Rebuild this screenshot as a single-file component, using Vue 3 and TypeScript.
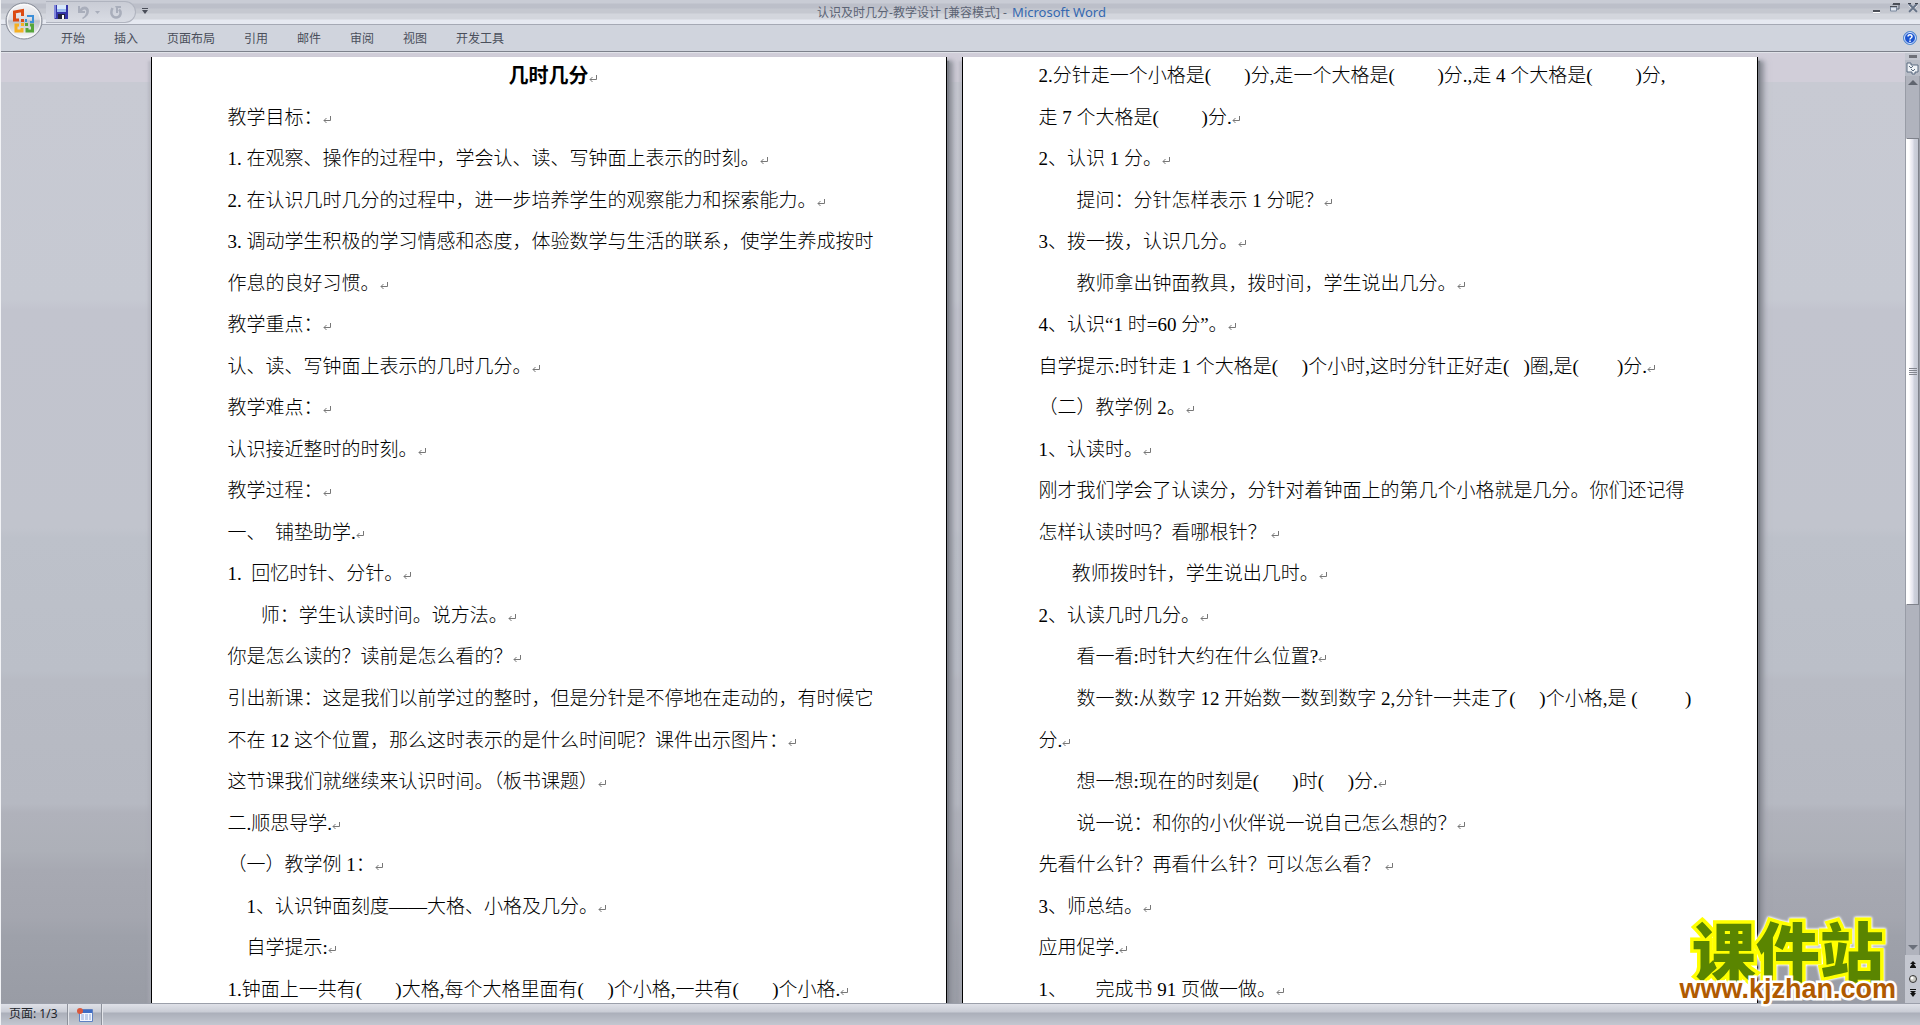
<script setup lang="ts">
interface Line {
  text: string
  mark?: boolean
  title?: boolean
}

const sp = (n: number): string => '\u00a0'.repeat(n)
const blank = (n: number): string => `(${sp(n)})`
const para = (text: string): Line => ({ text, mark: true })
const wrapped = (text: string): Line => ({ text })

const tabs: string[] = ['开始', '插入', '页面布局', '引用', '邮件', '审阅', '视图', '开发工具']

const pages: Line[][] = [
  [
    { text: '几时几分', mark: true, title: true },
    para('教学目标：'),
    para('1. 在观察、操作的过程中，学会认、读、写钟面上表示的时刻。'),
    para('2. 在认识几时几分的过程中，进一步培养学生的观察能力和探索能力。'),
    wrapped('3. 调动学生积极的学习情感和态度，体验数学与生活的联系，使学生养成按时'),
    para('作息的良好习惯。'),
    para('教学重点：'),
    para('认、读、写钟面上表示的几时几分。'),
    para('教学难点：'),
    para('认识接近整时的时刻。'),
    para('教学过程：'),
    para(`一、${sp(2)}铺垫助学.`),
    para(`1.${sp(2)}回忆时针、分针。`),
    para(`${sp(7)}师：学生认读时间。说方法。`),
    para('你是怎么读的？读前是怎么看的？'),
    wrapped('引出新课：这是我们以前学过的整时，但是分针是不停地在走动的，有时候它'),
    para('不在 12 这个位置，那么这时表示的是什么时间呢？课件出示图片：'),
    para('这节课我们就继续来认识时间。（板书课题）'),
    para('二.顺思导学.'),
    para('（一）教学例 1：'),
    para(`${sp(4)}1、认识钟面刻度——大格、小格及几分。`),
    para(`${sp(4)}自学提示:`),
    para(`1.钟面上一共有${blank(7)}大格,每个大格里面有${blank(5)}个小格,一共有${blank(7)}个小格.`),
  ],
  [
    wrapped(`2.分针走一个小格是${blank(7)}分,走一个大格是${blank(9)}分.,走 4 个大格是${blank(9)}分,`),
    para(`走 7 个大格是${blank(9)}分.`),
    para('2、认识 1 分。'),
    para(`${sp(8)}提问：分针怎样表示 1 分呢？`),
    para('3、拨一拨，认识几分。'),
    para(`${sp(8)}教师拿出钟面教具，拨时间，学生说出几分。`),
    para('4、认识“1 时=60 分”。'),
    para(`自学提示:时针走 1 个大格是${blank(5)}个小时,这时分针正好走${blank(3)}圈,是${blank(8)}分.`),
    para('（二）教学例 2。'),
    para('1、认读时。'),
    wrapped('刚才我们学会了认读分，分针对着钟面上的第几个小格就是几分。你们还记得'),
    para(`怎样认读时吗？看哪根针？${sp(1)}`),
    para(`${sp(7)}教师拨时针，学生说出几时。`),
    para('2、认读几时几分。'),
    para(`${sp(8)}看一看:时针大约在什么位置?`),
    wrapped(`${sp(8)}数一数:从数字 12 开始数一数到数字 2,分针一共走了${blank(5)}个小格,是${sp(1)}${blank(10)}`),
    para('分.'),
    para(`${sp(8)}想一想:现在的时刻是${blank(7)}时${blank(5)}分.`),
    para(`${sp(8)}说一说：和你的小伙伴说一说自己怎么想的？`),
    para(`先看什么针？再看什么针？可以怎么看？${sp(1)}`),
    para('3、师总结。'),
    para('应用促学.'),
    para(`1、${sp(6)}完成书 91 页做一做。`),
  ],
]
</script>

<template>
  <div class="word">
    <header class="titlebar">
      <div class="quick">
        <button type="button" class="tool" aria-label="保存">
          <svg width="14" height="14" viewBox="0 0 14 14">
            <path d="M0 0h14v14H1l-1-1z" fill="#3434a8" />
            <path d="M0 0h2v13H0z" fill="#7f86dc" />
            <path d="M3 0h9v7H3z" fill="#d7e8fb" />
            <path d="M3 4h9v3H3z" fill="#9dbdf0" />
            <path d="M4 9h7v5H4z" fill="#23233c" />
            <path d="M8 10h2v4H8z" fill="#fff" />
          </svg>
        </button>
        <button type="button" class="tool undo" aria-label="撤消">
          <svg width="12" height="13" viewBox="0 0 12 13">
            <path d="M1 0v7h7V5H5C8 2 10 4 9 7c-.5 2-2 4-4 5l1 1c4-2 6-5 6-8 0-5-6-6-9-2V0z" fill="#a9aebb" />
          </svg>
        </button>
        <svg class="tiny" width="5" height="3" viewBox="0 0 5 3"><path d="M0 0h5L2.500 3z" fill="#a9aebb" /></svg>
        <button type="button" class="tool redo" aria-label="重复">
          <svg width="12" height="13" viewBox="0 0 12 13">
            <path d="M2.500 2C0 7 2 11.500 6 11.500c4.500 0 6-5 3-8" fill="none" stroke="#a9aebb" stroke-width="2.500" />
            <path d="M5 0h6v2H8v5H6V2z" fill="#a9aebb" />
          </svg>
        </button>
      </div>
      <button type="button" class="tool more" aria-label="自定义快速访问工具栏">
        <svg width="6" height="6" viewBox="0 0 6 6"><path d="M0 0h6v1H0zM0 2h6L3 6z" fill="#4a4e59" /></svg>
      </button>
      <h1 class="caption">认识及时几分-教学设计 [兼容模式] - <span>Microsoft Word</span></h1>
      <div class="controls">
        <button type="button" aria-label="最小化">
          <svg width="10" height="10" viewBox="0 0 10 10"><path d="M1 7h7v2H1z" fill="#4b4f58" /><path d="M1 9h7v1H1z" fill="#fff" /></svg>
        </button>
        <button type="button" aria-label="还原">
          <svg width="10" height="10" viewBox="0 0 10 10">
            <path d="M3 2V1h6v5H7" fill="none" stroke="#596273" />
            <path d="M3 0h7v2H3z" fill="#4b4f58" />
            <path d="M.5 4h6v4h-6z" fill="#dfe5ef" stroke="#7a889d" />
            <path d="M0 3h7v1H0z" fill="#4b4f58" />
          </svg>
        </button>
        <button type="button" aria-label="关闭">
          <svg width="10" height="10" viewBox="0 0 10 10">
            <path d="M1 9l8-7M9 9L1 2" stroke="#fff" stroke-width="2" />
            <path d="M1 1l8 8M9 1L1 9" stroke="#667388" stroke-width="2" />
            <path d="M0 0h3v1H0zM7 0h3v1H7z" fill="#3f434c" />
          </svg>
        </button>
      </div>
    </header>

    <button type="button" class="orb" aria-label="Office 按钮">
      <svg width="38" height="38" viewBox="0 0 38 38">
        <defs>
          <linearGradient id="orbFill" x1="0" y1="0" x2="0" y2="1">
            <stop offset="0" stop-color="#f6f6f8" />
            <stop offset=".45" stop-color="#dcdde2" />
            <stop offset=".5" stop-color="#bfc2ca" />
            <stop offset="1" stop-color="#fdfdfe" />
          </linearGradient>
        </defs>
        <circle cx="19" cy="19" r="18" fill="url(#orbFill)" stroke="#858a96" />
        <circle cx="19" cy="19" r="16.500" fill="none" stroke="#fff" stroke-opacity=".8" />
        <g fill="none" stroke-width="3">
          <path d="M14 18H9.500V10l8-1.500V14" stroke="#dc4a12" />
          <path d="M22 14h6v6h-3" stroke="#3c8fd8" stroke-width="2" />
          <path d="M14 23h-3v6h6v-3" stroke="#f5b021" />
          <path d="M25 23h2.500v6H22v-3" stroke="#56a63a" />
        </g>
        <path d="M16 17h3v3h-3z" fill="#dc4a12" />
        <path d="M20 17h2v3h-2z" fill="#3c8fd8" />
        <path d="M16 21h3v3h-3z" fill="#f5b021" />
        <path d="M20 21h3v3h-3z" fill="#56a63a" />
      </svg>
    </button>

    <nav class="ribbon">
      <button v-for="tab in tabs" :key="tab" type="button" class="tab">{{ tab }}</button>
      <button type="button" class="help" aria-label="帮助">
        <svg width="14" height="14" viewBox="0 0 14 14">
          <circle cx="7" cy="7" r="6.500" fill="#1d55d0" stroke="#5b8fcd" />
          <circle cx="7" cy="7" r="5.500" fill="none" stroke="#dcebff" />
          <path d="M5 5.500c0-2.500 4-2.500 4 0C9 7 7 7 7 8.500M7 9.500v1.500" fill="none" stroke="#fff" stroke-width="1.500" />
        </svg>
      </button>
    </nav>

    <div class="workspace">
      <main class="desk">
        <article v-for="(page, p) in pages" :key="p" class="page">
          <p v-for="(line, i) in page" :key="i" :class="{ heading: line.title }">{{ line.text
            }}<svg v-if="line.mark" class="mark" width="8" height="8" viewBox="0 0 8 8"><path d="M7.500 0v4.500H1M3.500 2L1 4.500 3.500 7" fill="none" stroke="#777" /></svg></p>
        </article>
      </main>
      <aside class="scroll">
        <div class="split"></div>
        <button type="button" class="ruler" aria-label="标尺">
          <svg width="13" height="13" viewBox="0 0 13 13">
            <path d="M1 3V1h4v2h7v7h-3v2H6v-2H1z" fill="#eef1f5" stroke="#5a6b80" />
            <path d="M3 4l2 2 2-2M5 7l2 2 2-2" fill="none" stroke="#5a6b80" />
          </svg>
        </button>
        <div class="track">
          <svg width="10" height="6" viewBox="0 0 10 6"><path d="M5 0l5 5H0z" fill="#60656f" /></svg>
          <div class="before"></div>
          <div class="thumb"><i></i><i></i><i></i><i></i></div>
          <div class="after"></div>
          <svg width="10" height="6" viewBox="0 0 10 6"><path d="M0 0h10L5 5z" fill="#6b707b" /></svg>
        </div>
        <div class="browse">
          <button type="button" aria-label="前一页">
            <svg width="6" height="8" viewBox="0 0 6 8"><path d="M3 0l3 3H0zM3 2l3 4H0zM0 6h6v1H0z" fill="#111" /></svg>
          </button>
          <button type="button" aria-label="选择浏览对象">
            <svg width="8" height="8" viewBox="0 0 8 8"><circle cx="4" cy="4" r="3.500" fill="#c9c9c4" stroke="#333" /><circle cx="3" cy="3" r="1.500" fill="#fff" /></svg>
          </button>
          <button type="button" aria-label="下一页">
            <svg width="6" height="8" viewBox="0 0 6 8"><path d="M0 0h6v1H0zM0 2h6L3 5zM0 4h6L3 8z" fill="#111" /></svg>
          </button>
        </div>
      </aside>
    </div>

    <footer class="status">
      <span class="cell">页面: 1/3</span>
      <button type="button" class="cell macro" aria-label="录制宏">
        <svg width="16" height="14" viewBox="0 0 16 14">
          <path d="M2.500 1.500h13v12h-13z" fill="#f3f7ff" stroke="#5e80c2" />
          <path d="M3 2h12v3H3z" fill="#3f6cc4" />
          <path d="M4 7h10M4 9h10M4 11h10" stroke="#8fa8da" stroke-dasharray="3 1" />
          <circle cx="3" cy="3" r="3" fill="#d9573c" />
        </svg>
      </button>
    </footer>

    <div class="watermark">
      <strong>课件站</strong>
      <span>www.kjzhan.com</span>
    </div>
  </div>
</template>

<style>
body {
  margin: 0;
}
</style>

<style scoped>
.word {
  position: relative;
  display: flex;
  flex-direction: column;
  height: 100vh;
  box-sizing: border-box;
  border-left: 1px solid #f1f2f5;
  overflow: hidden;
  background: #d0d4dd;
  font-family: "Noto Sans", "Noto Sans CJK SC", sans-serif;
  font-size: 12px;
}

button {
  display: flex;
  align-items: center;
  justify-content: center;
  padding: 0;
  border: 0;
  background: none;
  font: inherit;
  color: inherit;
}

svg {
  display: block;
  flex: none;
}

.titlebar {
  display: flex;
  align-items: flex-start;
  height: 24px;
  flex: none;
  border-bottom: 1px solid #a5a9b4;
  background: linear-gradient(#c9ccd5 0 3px, #bcbfc9 4px 8px, #c5c8d0 9px 13px, #d3d6dd 14px 19px, #e6e9f1 20px);
}

.quick {
  display: flex;
  align-items: center;
  box-sizing: border-box;
  width: 90px;
  height: 22px;
  margin: 1px 0 0 45px;
  padding-left: 8px;
  border: 1px solid #b0b4bf;
  border-left: 0;
  border-radius: 0 11px 11px 0;
  background: linear-gradient(#c9ccd5, #d9dce4);
}

.undo {
  margin-left: 9px;
}

.tiny {
  margin-left: 6px;
}

.redo {
  margin-left: 10px;
}

.more {
  width: 8px;
  height: 22px;
  margin-left: 5px;
}

.caption {
  flex: 1;
  margin: 0;
  padding-right: 98px;
  font-size: 12px;
  font-weight: 400;
  line-height: 24px;
  text-align: center;
  color: #5c6475;
}

.caption span {
  padding-left: 2px;
  font-size: 13px;
  color: #3568b0;
}

.controls {
  display: flex;
  gap: 8px;
  padding: 3px 2px 0 0;
}

.orb {
  position: absolute;
  left: 4px;
  top: 2px;
}

.ribbon {
  display: flex;
  align-items: center;
  gap: 29px;
  height: 26px;
  flex: none;
  padding: 0 3px 0 60px;
  border-bottom: 1px solid #7d818b;
  color: #4a4f5b;
}

.tab {
  height: 24px;
}

.help {
  margin-left: auto;
}

.workspace {
  display: flex;
  flex: 1;
  min-height: 0;
  border-top: 1px solid #e1e3e9;
}

.desk {
  display: flex;
  flex: 1;
  justify-content: center;
  gap: 15px;
  min-width: 0;
  padding: 4px 0 0 2px;
  background: linear-gradient(#d1ced9 0 3%, #c8cad3 3%, #c6c9d2 26%, #c2c4ce 27%, #c1c4cd 50%, #bdc1ca 51%, #bbbfc8 65%, #b8bbc4 66%, #b6b9c2 79%, #b0b2bb 80%, #adb0b8 84%, #a7a9b2 86%, #a4a6af 91%, #9ea1aa 93%, #999ca5 100%);
}

.page {
  display: flex;
  flex: none;
  flex-direction: column;
  justify-content: space-between;
  box-sizing: border-box;
  width: 796px;
  padding: 6px 76px 0;
  border: solid #000;
  border-width: 0 1px;
  background: #fff;
  box-shadow: 2px 4px 1px #7d8089, 5px 4px 4px #8b8e97, 8px 4px 5px #a3a6af80, -3px 4px 2px #a9acb680;
  font-family: "Liberation Serif", "Noto Sans CJK SC", serif;
  font-size: 19px;
  font-weight: 300;
  line-height: 26px;
  color: #000;
}

.page p {
  height: 26px;
  margin: 0;
  white-space: pre;
}

.page .heading {
  padding-left: 8px;
  font-size: 20px;
  font-weight: 700;
  text-align: center;
}

.mark {
  display: inline-block;
}

.scroll {
  display: flex;
  flex-direction: column;
  flex: none;
  width: 15px;
  background: #c4c7d0;
}

.split {
  width: 8px;
  height: 3px;
  margin: 2px 4px;
  flex: none;
  background: #6e7078;
}

.ruler {
  height: 16px;
  flex: none;
  background: #b8bcc6;
}

.track {
  display: flex;
  flex-direction: column;
  align-items: center;
  flex: 1;
  padding: 4px 0;
  border: solid #989ca6;
  border-width: 0 1px;
  background: #b0b3bd;
}

.before {
  flex: 52;
}

.thumb {
  display: flex;
  flex: 465;
  flex-direction: column;
  align-items: center;
  justify-content: center;
  gap: 1px;
  box-sizing: border-box;
  width: 13px;
  border: 1px solid #7f828b;
  border-left-color: #fff;
  background: linear-gradient(90deg, #fff 0 2px, #f0eff5 4px, #e3e4ee 6px, #cfd2dd 7px, #c4c8d3);
}

.thumb i {
  width: 8px;
  height: 1px;
  background: #83868f;
}

.after {
  flex: 340;
}

.browse {
  display: flex;
  flex-direction: column;
  justify-content: space-evenly;
  height: 48px;
  flex: none;
}

.status {
  display: flex;
  height: 21px;
  flex: none;
  border-top: 1px solid #9b9faa;
  background: linear-gradient(#dfe1e8 0, #c9ccd5 8px, #abafba 9px, #b5b9c3 14px, #c5c9d2 22px);
  line-height: 20px;
  color: #22252c;
}

.cell {
  box-sizing: border-box;
  border-right: 1px solid #8d919b;
  box-shadow: 1px 0 #e3e5ea;
}

.cell:first-child {
  width: 67px;
  padding-left: 8px;
}

.macro {
  width: 34px;
}

.watermark {
  position: absolute;
  right: 24px;
  bottom: 22px;
  display: flex;
  flex-direction: column;
  align-items: center;
}

.watermark strong {
  font-family: "Noto Sans CJK SC", sans-serif;
  font-size: 64px;
  font-weight: 900;
  line-height: 56px;
  color: #5a8500;
  -webkit-text-stroke: 7px #ff0;
  paint-order: stroke fill;
  filter: drop-shadow(0 0 1px #fff) drop-shadow(0 0 1px #fff);
}

.watermark span {
  position: relative;
  font-family: "Liberation Sans", sans-serif;
  font-size: 27px;
  font-weight: 700;
  line-height: 27px;
  color: #b05a00;
  -webkit-text-stroke: 5px #fff;
  paint-order: stroke fill;
}
</style>
